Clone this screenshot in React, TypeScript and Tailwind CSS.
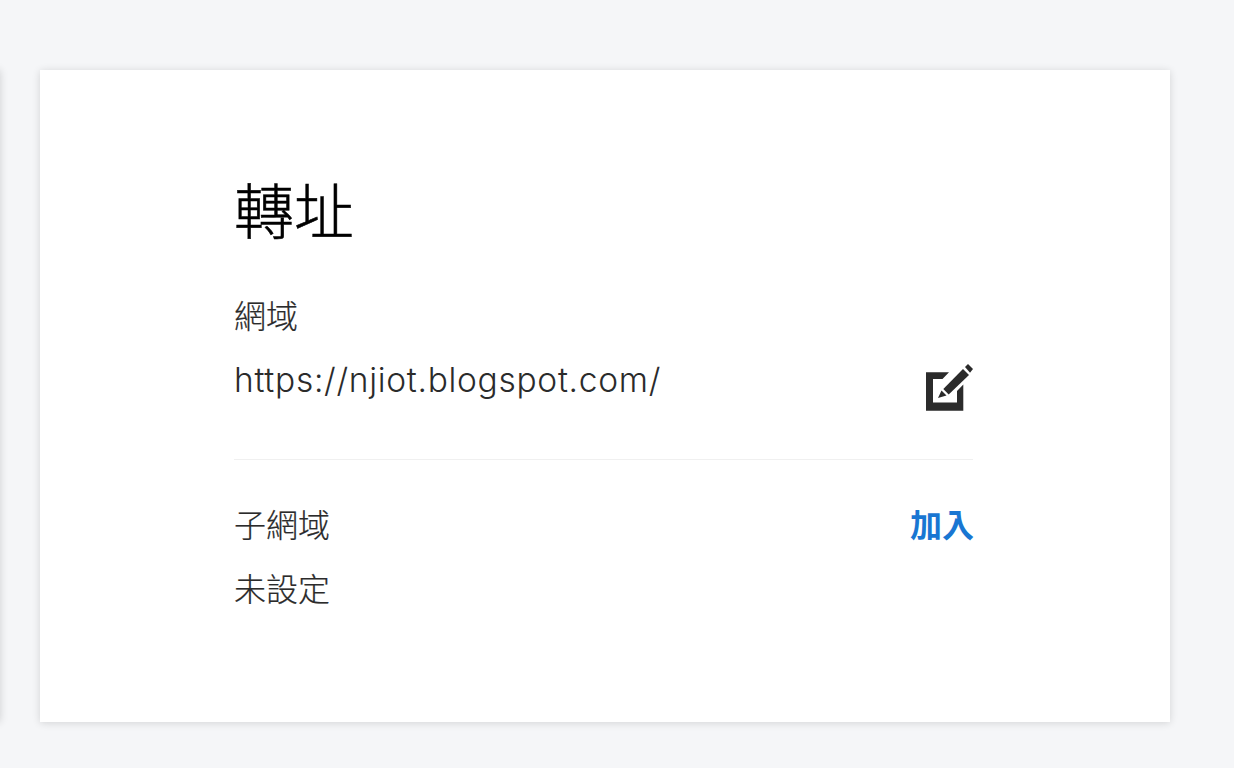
import React from "react";

const font = 'Inter, "Noto Sans CJK TC", sans-serif';

function EditIcon() {
  return (
    <svg width="47" height="47" viewBox="0 0 47 47" className="block">
      <path d="M0 8.300H23L16.500 15H7V38.500H31V27L37.300 20.500V46.700H0Z" fill="#2b2b2b" />
      <path d="M17.300 25L37 5L43 11L22.700 30.500Z" fill="#2b2b2b" />
      <path d="M12 34L15.500 26.500L20.500 31.500Z" fill="#2b2b2b" />
      <path d="M39 3L42 0L47 5L44 8.700Z" fill="#2b2b2b" />
    </svg>
  );
}

export default function App() {
  return (
    <div className="relative min-h-[768px] overflow-hidden bg-[#f5f6f8] font-light" style={{ fontFamily: font }}>
      <div className="absolute left-[-20px] top-[70px] h-[652px] w-[20px] bg-white shadow-[0_0_8px_rgba(0,0,0,0.16)]" />
      <div className="ml-[40px] w-[1130px] pt-[70px]">
        <div className="h-[652px] bg-white pl-[194px] pt-[103px] shadow-[0_1px_8px_rgba(0,0,0,0.14)]">
          <div className="w-[739px]">
            <h1 className="text-[60px] leading-[78px] font-light text-black [-webkit-text-stroke:0.5px_#000]">轉址</h1>
            <div className="mt-[42px] text-[32px] leading-[48px] text-[#2b2b2b] [-webkit-text-stroke:0.2px_#2b2b2b]">網域</div>
            <div className="mt-[15px] flex h-[104px] items-start justify-between border-b border-[#f0f0f0]">
              <div className="text-[33.5px] leading-[48px] tracking-[0.7px] text-[#2b2b2b]">https://njiot.blogspot.com/</div>
              <div className="mt-[8px]"><EditIcon /></div>
            </div>
            <div className="mt-[42px] flex items-center justify-between">
              <div className="text-[32px] leading-[48px] text-[#2b2b2b] [-webkit-text-stroke:0.2px_#2b2b2b]">子網域</div>
              <div className="translate-x-px text-[32px] leading-[48px] font-bold text-[#1976d2]">加入</div>
            </div>
            <div className="mt-[16px] text-[32px] leading-[48px] text-[#2b2b2b] [-webkit-text-stroke:0.2px_#2b2b2b]">未設定</div>
          </div>
        </div>
      </div>
    </div>
  );
}
